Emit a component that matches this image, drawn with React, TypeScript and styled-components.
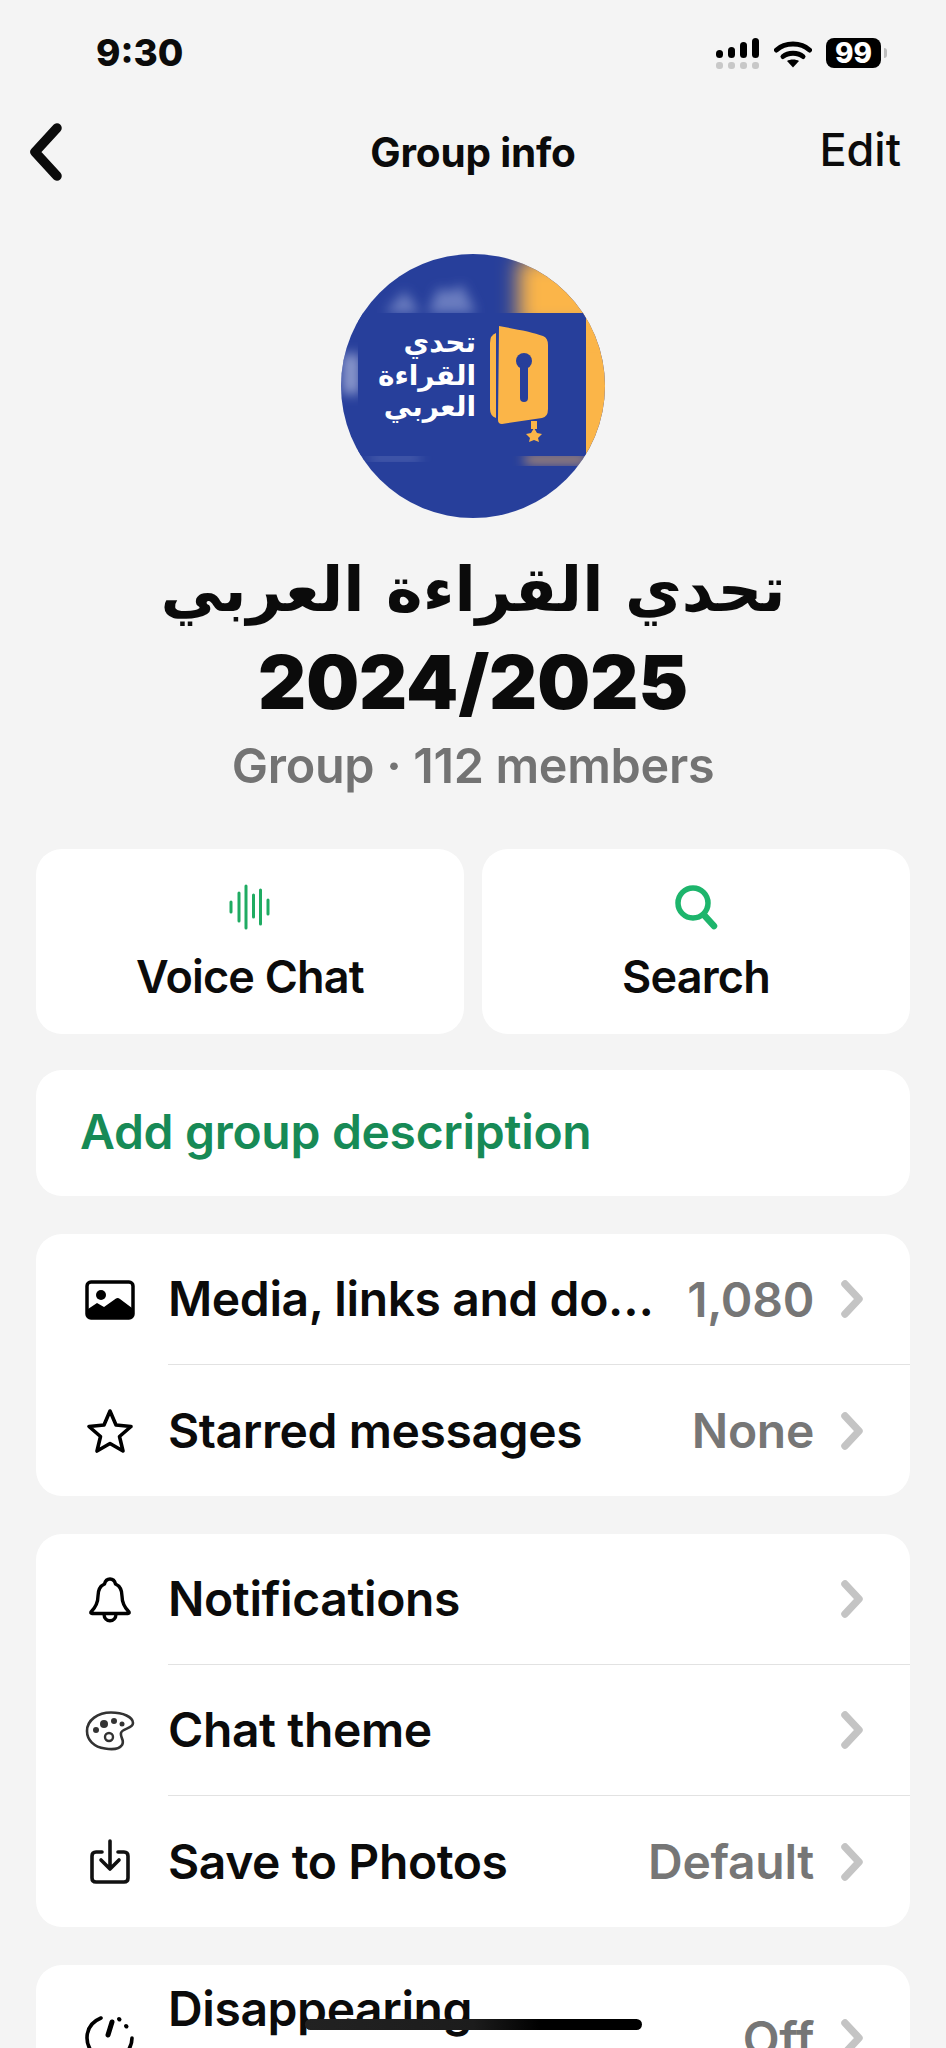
import React from "react";
import styled, { createGlobalStyle } from "styled-components";

const GlobalStyle = createGlobalStyle`
  html, body {
    margin: 0;
    height: 2048px;
    overflow: hidden;
    background: #f4f4f4;
  }
  * {
    box-sizing: border-box;
  }
`;

const Page = styled.div`
  position: relative;
  width: 946px;
  height: 2048px;
  overflow: hidden;
  background: #f4f4f4;
  color: #0b0b0b;
  font-family: Inter, "DejaVu Sans", sans-serif;
`;

const StatusBar = styled.div`
  height: 108px;
  padding: 30px 65px 0 96px;
  display: flex;
  justify-content: space-between;
  align-items: flex-start;
`;

const Clock = styled.span`
  font-size: 37px;
  font-weight: 800;
  line-height: 46px;
`;

const Nav = styled.div`
  display: grid;
  grid-template-columns: 1fr auto 1fr;
  align-items: center;
  height: 88px;
  padding: 0 45px;
`;

const BackIcon = styled.svg`
  margin-left: -15px;
`;

const NavTitle = styled.div`
  text-align: center;
  font-size: 40.5px;
  font-weight: 700;
  letter-spacing: -0.2px;
`;

const EditLink = styled.span`
  justify-self: end;
  font-size: 45px;
  font-weight: 500;
  margin-top: -6px;
`;

const Avatar = styled.div`
  width: 264px;
  height: 264px;
  margin: 58px auto 0;
  svg {
    display: block;
  }
`;

const Title = styled.div`
  margin-top: 26px;
  text-align: center;
  line-height: 92px;
`;

const TitleArabic = styled.div`
  font-family: "DejaVu Sans", sans-serif;
  font-weight: 700;
  font-size: 62px;
`;

const TitleYear = styled.div`
  font-size: 74.5px;
  font-weight: 900;
`;

const Subtitle = styled.div`
  margin-top: 8px;
  text-align: center;
  font-size: 48.5px;
  font-weight: 600;
  letter-spacing: -0.3px;
  line-height: 60px;
  color: #737373;
`;

const Content = styled.div`
  display: flex;
  flex-direction: column;
  gap: 38px;
  padding: 0 36px;
  margin-top: 53px;
`;

const Actions = styled.div`
  display: grid;
  grid-template-columns: 428px 428px;
  gap: 18px;
  margin-bottom: -2px;
`;

const Card = styled.div`
  background: #fff;
  border-radius: 26px;
`;

const ActionCard = styled(Card)`
  height: 185px;
  padding-top: 35px;
  display: flex;
  flex-direction: column;
  align-items: center;
  font-size: 45px;
  font-weight: 600;
  letter-spacing: -0.8px;
  svg {
    display: block;
  }
`;

const ActionLabel = styled.div`
  margin-top: 20px;
  line-height: 54px;
`;

const DescriptionCard = styled(Card)`
  height: 126px;
  display: flex;
  align-items: center;
  padding: 0 0 4px 44px;
  font-size: 48px;
  font-weight: 600;
  letter-spacing: -0.3px;
  color: #178a56;
`;

const RowList = styled(Card)`
  overflow: hidden;
`;

const Row = styled.div`
  display: flex;
  align-items: center;
  min-height: 131px;
`;

const RowIcon = styled.div`
  width: 132px;
  flex: none;
  display: flex;
  justify-content: center;
  padding-left: 16px;
  svg {
    display: block;
  }
`;

const RowBody = styled.div<{ $divider: boolean }>`
  flex: 1;
  min-width: 0;
  align-self: stretch;
  display: flex;
  align-items: center;
  padding: 15px 45px 15px 0;
  border-bottom: ${(p) => (p.$divider ? "1.5px solid #e2e2e2" : "none")};
`;

const RowLabel = styled.div`
  flex: 1;
  min-width: 0;
  margin-right: 24px;
  font-size: 48px;
  font-weight: 600;
  letter-spacing: -0.4px;
  line-height: 58px;
  white-space: nowrap;
  overflow: hidden;
  text-overflow: ellipsis;
`;

const RowValue = styled.div`
  font-size: 48px;
  font-weight: 600;
  letter-spacing: -0.3px;
  color: #767676;
  margin-right: 25px;
`;

const HomeBar = styled.div`
  position: absolute;
  left: 305px;
  top: 2019px;
  width: 337px;
  height: 11px;
  border-radius: 6px;
  background: linear-gradient(90deg, #222 0%, #1c1c1c 50%, #000 70%);
`;

const Chevron = () => (
  <svg width="26" height="38" viewBox="0 0 26 38" fill="none" style={{ flex: "none" }}>
    <path d="M6 4 L20 19 L6 34" stroke="#c4c4c4" strokeWidth="7.5" strokeLinecap="round" strokeLinejoin="round" />
  </svg>
);

const SignalIcon = () => (
  <svg width="44" height="32" viewBox="0 0 44 32" style={{ marginRight: 14, marginTop: 8 }}>
    <rect x="0" y="12" width="7" height="8" rx="3.5" fill="#000" />
    <rect x="12" y="9" width="7" height="11" rx="3.5" fill="#000" />
    <rect x="24" y="4" width="7" height="16" rx="3.5" fill="#000" />
    <rect x="36" y="0" width="7" height="20" rx="3.5" fill="#000" />
    <rect x="0" y="24" width="7" height="7" rx="3" fill="#c8c8c8" />
    <rect x="12" y="24" width="7" height="7" rx="3" fill="#c8c8c8" />
    <rect x="24" y="24" width="7" height="7" rx="3" fill="#c8c8c8" />
    <rect x="36" y="24" width="7" height="7" rx="3" fill="#c8c8c8" />
  </svg>
);

const WifiIcon = () => (
  <svg width="38" height="28" viewBox="0 0 38 28" fill="none" style={{ marginRight: 14, marginTop: 10 }}>
    <path d="M2.5 10 C11 2 27 2 35.5 10" stroke="#000" strokeWidth="5" strokeLinecap="round" />
    <path d="M9 16.5 C14 12 24 12 29 16.5" stroke="#000" strokeWidth="5" strokeLinecap="round" />
    <path d="M13 21 C16 19 22 19 25 21 L19 27.5 Z" fill="#000" />
  </svg>
);

const StatusIcons = styled.div`
  display: flex;
  align-items: flex-start;
`;

const Battery = styled.div`
  position: relative;
  width: 55px;
  height: 30px;
  margin-top: 8px;
  border-radius: 8px;
  background: #000;
  color: #fff;
  font-size: 28px;
  font-weight: 800;
  line-height: 30px;
  text-align: center;
  &::after {
    content: "";
    position: absolute;
    right: -6px;
    top: 10px;
    width: 3px;
    height: 10px;
    border-radius: 0 3px 3px 0;
    background: #bdbdbd;
  }
`;

const LogoText = styled.text`
  font-family: "DejaVu Sans", sans-serif;
  font-size: 28px;
  font-weight: 700;
  fill: #fff;
  text-anchor: start;
`;

const AvatarArt = () => (
  <svg width="264" height="264" viewBox="21 15 264 264">
    <defs>
      <clipPath id="round">
        <circle cx="153" cy="147" r="132" />
      </clipPath>
      <filter id="soft" x="-30%" y="-30%" width="160%" height="160%">
        <feGaussianBlur stdDeviation="6" />
      </filter>
      <filter id="softer" x="-40%" y="-40%" width="180%" height="180%">
        <feGaussianBlur stdDeviation="10" />
      </filter>
    </defs>
    <g clipPath="url(#round)">
      <rect x="21" y="15" width="264" height="264" fill="#273f9b" />
      <rect x="266" y="70" width="20" height="150" fill="#fbb548" />
      <rect x="198" y="20" width="100" height="70" fill="#fbb548" filter="url(#softer)" />
      <rect x="205" y="217" width="62" height="7" fill="#e6ab62" filter="url(#soft)" />
      <path d="M65 74 L85 52 L100 74 Z M108 74 L118 50 L132 52 L142 46 L156 74 Z" fill="#6b7dc0" filter="url(#soft)" />
      <rect x="22" y="115" width="18" height="40" fill="#8b98cc" filter="url(#soft)" />
      <rect x="50" y="217" width="50" height="4" fill="#7a8ac6" filter="url(#soft)" />
      <rect x="38" y="74" width="228" height="143" fill="#273f9b" />
      <path
        d="M179 87 C195 90 213 93 223 97 Q228 99 228 106 L228 170 Q228 178 222 179 L182 185 Q178 185 178 181 Z"
        fill="#fbb548"
      />
      <path d="M176 94 Q170 96 170 104 L170 170 Q170 177 176 179 Z" fill="#fbb548" />
      <circle cx="204" cy="122" r="8" fill="#273f9b" />
      <rect x="200" y="124" width="8" height="39" rx="4" fill="#273f9b" />
      <rect x="211" y="182" width="6" height="8" fill="#fbb548" />
      <path
        d="M214 189 L217 194 L222 195 L218 199 L219 203 L214 201 L209 203 L210 199 L206 195 L211 194 Z"
        fill="#fbb548"
      />
      <LogoText x="156" y="113" direction="rtl">تحدي</LogoText>
      <LogoText x="156" y="146" direction="rtl">القراءة</LogoText>
      <LogoText x="156" y="177" direction="rtl">العربي</LogoText>
    </g>
  </svg>
);

const VoiceIcon = () => (
  <svg width="42" height="46" viewBox="0 0 42 46" stroke="#1fab62" strokeWidth="3" strokeLinecap="round">
    <path d="M2 18V28M10 9V37M17 2V44M24.5 11V33M31.5 6V40M39 16V30" />
  </svg>
);

const SearchIcon = () => (
  <svg width="44" height="46" viewBox="0 0 44 46" fill="none" stroke="#1db56c" strokeWidth="5.5" strokeLinecap="round">
    <circle cx="19" cy="19" r="15" />
    <path d="M30 31 L40 42" strokeWidth="6.5" />
  </svg>
);

const ImageIcon = () => (
  <svg width="50" height="40" viewBox="0 0 50 40" fill="none">
    <rect x="2" y="2" width="46" height="36" rx="4" stroke="#000" strokeWidth="3.5" />
    <circle cx="16" cy="15" r="5" fill="#000" />
    <path d="M3 29 L12 23 L19 27 L31 18.5 Q33 17.5 35 19 L47 28 L48 36 Q48 38 46 38 L4 38 Q2 38 2 36 Z" fill="#000" />
  </svg>
);

const StarIcon = () => (
  <svg width="48" height="46" viewBox="0 0 48 46" fill="none">
    <path
      d="M24 3 L30 17 L45 18.5 L33.5 28.5 L37 43 L24 35.5 L11 43 L14.5 28.5 L3 18.5 L18 17 Z"
      stroke="#000"
      strokeWidth="3.6"
      strokeLinejoin="round"
    />
  </svg>
);

const BellIcon = () => (
  <svg width="42" height="46" viewBox="0 0 42 46" fill="none" stroke="#000" strokeWidth="3.4" strokeLinejoin="round">
    <path d="M21 2 C25 2 26 5 26.5 7 C31 9 33 13 33 19 C33 27 36 31 40 35 Q40.5 36.5 39 36.5 L3 36.5 Q1.5 36.5 2 35 C6 31 9 27 9 19 C9 13 11 9 15.5 7 C16 5 17 2 21 2 Z" />
    <path d="M15 37 C15 46 27 46 27 37" />
  </svg>
);

const PaletteIcon = () => (
  <svg width="50" height="42" viewBox="0 0 50 42" fill="none">
    <path
      d="M26 2.5 C38 2.5 48 7 48 13 C48 19 37 18 36 23 C35 28 40 30 37 35 C34 39.5 26 39.5 20 38.5 C9 37 2 30 2 21 C2 10 13 2.5 26 2.5 Z"
      stroke="#333"
      strokeWidth="2.6"
    />
    <circle cx="19" cy="14" r="4" fill="#333" />
    <circle cx="29" cy="11" r="3" fill="#333" />
    <circle cx="37" cy="14" r="2.5" fill="#333" />
    <circle cx="11" cy="20" r="3" fill="#333" />
    <circle cx="24" cy="27" r="4" stroke="#333" strokeWidth="2.4" />
  </svg>
);

const SaveIcon = () => (
  <svg width="40" height="46" viewBox="0 0 40 46" fill="none" stroke="#111" strokeWidth="3.6" strokeLinecap="round" strokeLinejoin="round">
    <path d="M12 13 L6 13 Q2 13 2 17 L2 39 Q2 43 6 43 L34 43 Q38 43 38 39 L38 17 Q38 13 34 13 L28 13" />
    <path d="M20 2 L20 29 M11 21 L20 30 L29 21" />
  </svg>
);

const TimerIcon = () => (
  <svg width="50" height="50" viewBox="0 0 50 50" fill="none" stroke="#000" strokeWidth="3.6" strokeLinecap="round">
    <path d="M16 5 C6 9 2 17 2 25 C2 37 12 47 25 47 C37 47 47 37 47 25" />
    <path d="M23 22 L27 9" strokeWidth="5" />
    <path d="M34 6 L34.5 6.5 M41 13 L41.5 13.5" strokeWidth="4" />
  </svg>
);

type RowData = {
  icon: React.ReactNode;
  label: React.ReactNode;
  value?: string;
};

const mediaRows: RowData[] = [
  { icon: <ImageIcon />, label: "Media, links and documents", value: "1,080" },
  { icon: <StarIcon />, label: "Starred messages", value: "None" },
];

const settingsRows: RowData[] = [
  { icon: <BellIcon />, label: "Notifications" },
  { icon: <PaletteIcon />, label: "Chat theme" },
  { icon: <SaveIcon />, label: "Save to Photos", value: "Default" },
];

const privacyRows: RowData[] = [
  {
    icon: <TimerIcon />,
    label: (
      <>
        Disappearing
        <br />
        messages
      </>
    ),
    value: "Off",
  },
];

const RowGroup = ({ rows }: { rows: RowData[] }) => (
  <RowList>
    {rows.map((row, i) => (
      <Row key={i}>
        <RowIcon>{row.icon}</RowIcon>
        <RowBody $divider={i < rows.length - 1}>
          <RowLabel>{row.label}</RowLabel>
          {row.value && <RowValue>{row.value}</RowValue>}
          <Chevron />
        </RowBody>
      </Row>
    ))}
  </RowList>
);

export default function App() {
  return (
    <Page>
      <GlobalStyle />
      <StatusBar>
        <Clock>9:30</Clock>
        <StatusIcons>
          <SignalIcon />
          <WifiIcon />
          <Battery>99</Battery>
        </StatusIcons>
      </StatusBar>
      <Nav>
        <BackIcon width="44" height="64" viewBox="0 0 44 64" fill="none">
          <path d="M27 8 L5 32 L27 56" stroke="#0b0b0b" strokeWidth="9.5" strokeLinecap="round" strokeLinejoin="round" />
        </BackIcon>
        <NavTitle>Group info</NavTitle>
        <EditLink>Edit</EditLink>
      </Nav>
      <Avatar>
        <AvatarArt />
      </Avatar>
      <Title>
        <TitleArabic>تحدي القراءة العربي</TitleArabic>
        <TitleYear>2024/2025</TitleYear>
      </Title>
      <Subtitle>Group · 112 members</Subtitle>
      <Content>
        <Actions>
          <ActionCard>
            <VoiceIcon />
            <ActionLabel>Voice Chat</ActionLabel>
          </ActionCard>
          <ActionCard>
            <SearchIcon />
            <ActionLabel>Search</ActionLabel>
          </ActionCard>
        </Actions>
        <DescriptionCard>Add group description</DescriptionCard>
        <RowGroup rows={mediaRows} />
        <RowGroup rows={settingsRows} />
        <RowGroup rows={privacyRows} />
      </Content>
      <HomeBar />
    </Page>
  );
}
